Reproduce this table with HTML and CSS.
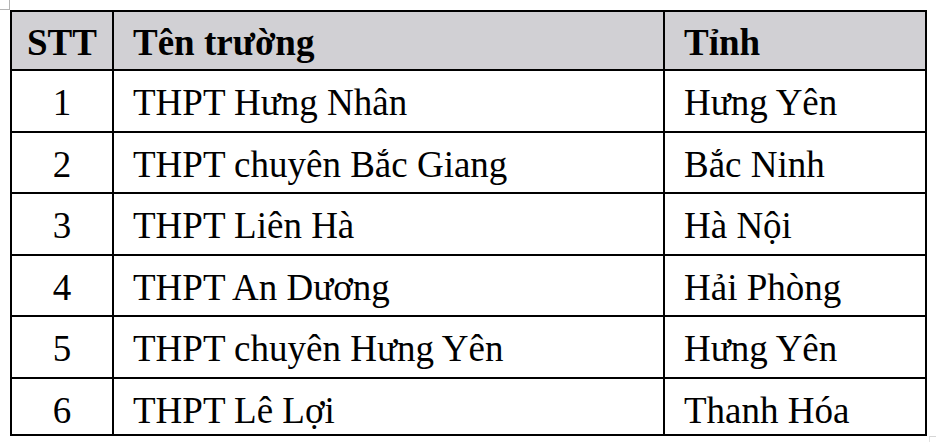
FILE: index.html
```html
<!DOCTYPE html>
<html lang="vi">
<head>
<meta charset="utf-8">
<title>Danh sách trường</title>
<link rel="stylesheet" href="styles.css">
</head>
<body>
<div class="page">
  <span class="mark mark-tl"></span>
  <table class="schools">
    <colgroup>
      <col class="c-stt">
      <col class="c-name">
      <col class="c-prov">
    </colgroup>
    <thead>
      <tr class="head">
        <th class="num">STT</th>
        <th>Tên trường</th>
        <th>Tỉnh</th>
      </tr>
    </thead>
    <tbody>
      <tr><td class="num">1</td><td>THPT Hưng Nhân</td><td>Hưng Yên</td></tr>
      <tr><td class="num">2</td><td>THPT chuyên Bắc Giang</td><td>Bắc Ninh</td></tr>
      <tr><td class="num">3</td><td>THPT Liên Hà</td><td>Hà Nội</td></tr>
      <tr><td class="num">4</td><td>THPT An Dương</td><td>Hải Phòng</td></tr>
      <tr><td class="num">5</td><td>THPT chuyên Hưng Yên</td><td>Hưng Yên</td></tr>
      <tr><td class="num">6</td><td>THPT Lê Lợi</td><td>Thanh Hóa</td></tr>
    </tbody>
  </table>
  <span class="mark mark-br"></span>
</div>
</body>
</html>
```

FILE: styles.css
```css
html, body {
  margin: 0;
  padding: 0;
  background: #ffffff;
}

.page {
  position: relative;
  width: 936px;
  height: 442px;
  padding: 10px 0 0 10px;
  box-sizing: border-box;
  font-family: "Liberation Serif", "Times New Roman", serif;
  color: #000;
}

.schools {
  border-collapse: separate;
  border-spacing: 0;
  table-layout: fixed;
  width: 917px;
  border-top: 2px solid #000;
  border-left: 2px solid #000;
}

.c-stt { width: 102px; }
.c-name { width: 551px; }
.c-prov { width: 262px; }

.schools th,
.schools td {
  border-right: 2px solid #000;
  border-bottom: 2px solid #000;
  padding: 11px 0 0 19px;
  font-size: 37px;
  line-height: 41px;
  text-align: left;
  vertical-align: top;
  white-space: nowrap;
}

.schools th {
  font-weight: bold;
  background: #d1d0d4;
  padding-top: 10px;
}

.schools .num {
  text-align: center;
  padding-left: 0;
}

.schools .head {
  height: 59px;
}

.schools tbody tr {
  height: 61.5px;
}

.schools tbody tr:last-child {
  height: 57px;
}

.mark {
  position: absolute;
  width: 9px;
  height: 9px;
}

.mark-tl {
  left: 0;
  top: 0;
  border-right: 1px solid #b4b4b4;
  border-bottom: 1px solid #b4b4b4;
}

.mark-br {
  left: 929px;
  top: 436px;
  border-left: 1px solid #e2e2e2;
  border-top: 1px solid #d6d6d6;
}
```
